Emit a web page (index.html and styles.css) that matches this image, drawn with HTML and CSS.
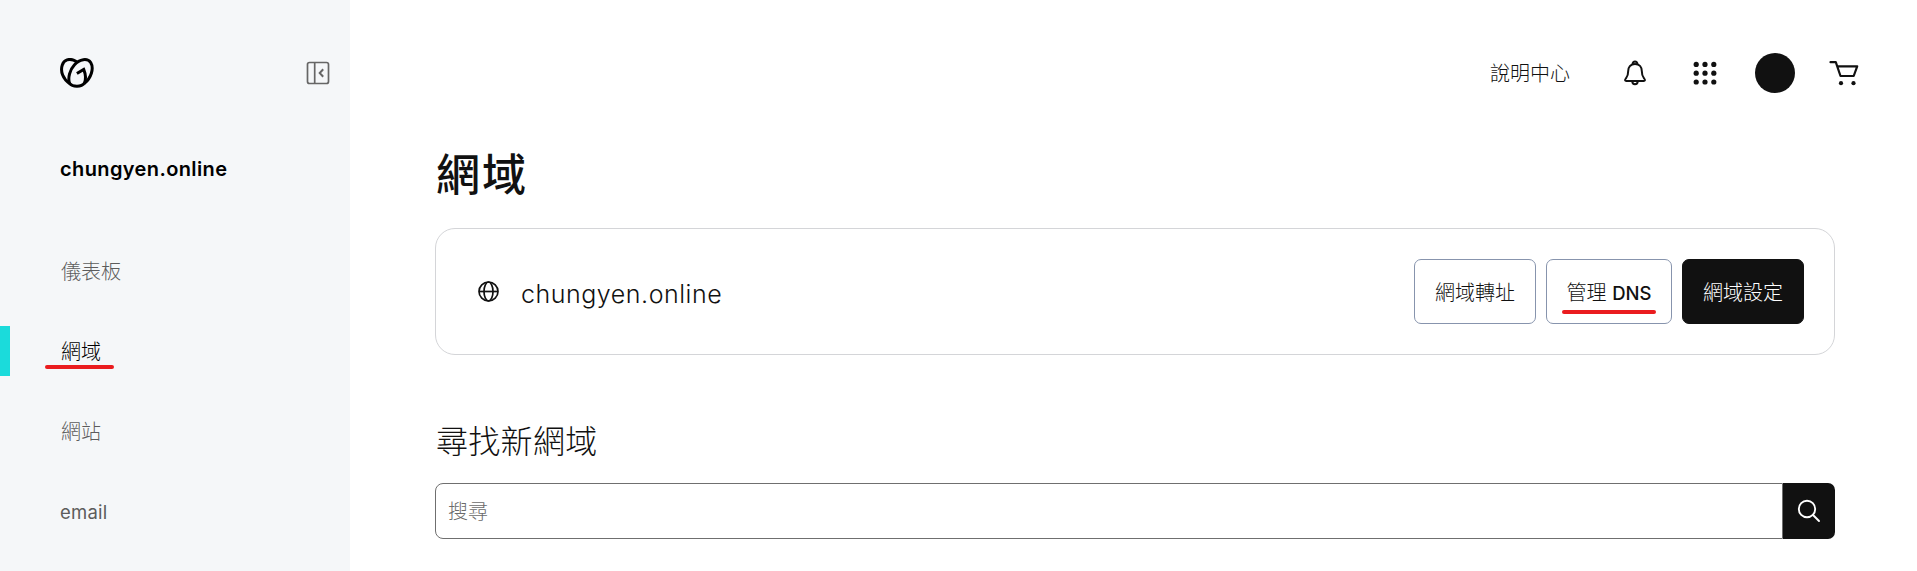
FILE: index.html
```html
<!DOCTYPE html>
<html lang="zh-Hant">
<head>
<meta charset="utf-8">
<title>網域</title>
<link rel="stylesheet" href="styles.css">
</head>
<body>
<div class="app">
  <aside class="sidebar">
    <div class="brand">
      <svg class="logo" width="34" height="30" viewBox="0 0 34 30" fill="none" stroke="#000" stroke-width="3">
        <path d="M24.5 25.2C21.500 29.200 12.500 29.200 9.500 25.400C3 21 .2 13.500 2.200 7.200C4 1.500 9.500 .5 13.500 2.200Q16 3.200 17.500 4.800"/>
        <path d="M9.700 25.700C7.400 20 10 11.500 14.500 6.700C19.500 1 27.500 -.2 30.700 4.500C34.300 10.500 31 20 24.400 25.400"/>
        <path d="M16.900 15.500L23.700 11.400Q27 19.500 24.300 25.500"/>
      </svg>
      <svg class="toggle" width="24" height="24" viewBox="0 0 24 24" fill="none" stroke="#666" stroke-width="1.700">
        <rect x="1.500" y="1.500" width="21" height="21" rx="2"/><path d="M8.700 1.500V22.500"/><path d="M17.200 8.200L13.700 12L17.200 15.800" stroke-width="2"/>
      </svg>
    </div>
    <div class="site-name">chungyen.online</div>
    <nav class="nav">
      <a class="nav-item">儀表板</a>
      <a class="nav-item active"><span class="marked">網域</span></a>
      <a class="nav-item">網站</a>
      <a class="nav-item email">email</a>
    </nav>
  </aside>
  <main class="main">
    <header class="topbar">
      <a class="help">說明中心</a>
      <svg class="bell" width="22" height="26" viewBox="0 0 22 26" fill="none" stroke="#111" stroke-width="2" stroke-linejoin="round">
        <path d="M11 4C6.400 4 4.200 7.300 4.200 11C4.200 16 3 17 1.800 18.500C.6 20 1 21 2.300 21H19.700C21 21 21.400 20 20.200 18.500C19 17 17.800 16 17.800 11C17.800 7.300 15.600 4 11 4Z"/>
        <path d="M8.800 4.300C8 .6 14 .6 13.200 4.300"/><path d="M8.300 21.300C8.300 25.300 13.700 25.300 13.700 21.300"/>
      </svg>
      <svg class="apps" width="24" height="24" viewBox="0 0 24 24" fill="#111">
        <circle cx="3.200" cy="3.400" r="2.600"/><circle cx="12" cy="3.400" r="2.600"/><circle cx="20.800" cy="3.400" r="2.600"/>
        <circle cx="3.200" cy="12.200" r="2.600"/><circle cx="12" cy="12.200" r="2.600"/><circle cx="20.800" cy="12.200" r="2.600"/>
        <circle cx="3.200" cy="21" r="2.600"/><circle cx="12" cy="21" r="2.600"/><circle cx="20.800" cy="21" r="2.600"/>
      </svg>
      <span class="avatar"></span>
      <svg class="cart" width="30" height="26" viewBox="0 0 30 26" fill="none" stroke="#111" stroke-width="2.200" stroke-linejoin="round">
        <path d="M1.500 2.200H6.800L11.500 16H24.700L28.200 6.300H8.300" stroke-linecap="round"/>
        <circle cx="12" cy="23.200" r="2.100" fill="#111" stroke="none"/><circle cx="24.500" cy="23.200" r="2.100" fill="#111" stroke="none"/>
      </svg>
    </header>
    <h1 class="title">網域</h1>
    <section class="card">
      <svg class="globe" width="22" height="22" viewBox="0 0 22 22" fill="none" stroke="#111" stroke-width="1.700">
        <circle cx="10.500" cy="10.500" r="9.500"/><ellipse cx="10.500" cy="10.500" rx="4.500" ry="9.500"/><path d="M1 10.500H20"/>
      </svg>
      <span class="domain">chungyen.online</span>
      <div class="actions">
        <button class="btn forward">網域轉址</button>
        <button class="btn dns"><span class="marked">管理 <b class="latin">DNS</b></span></button>
        <button class="btn dark">網域設定</button>
      </div>
    </section>
    <h2 class="subtitle">尋找新網域</h2>
    <div class="search">
      <div class="field">搜尋</div>
      <button class="go">
        <svg width="24" height="24" viewBox="0 0 24 24" fill="none" stroke="#fff" stroke-width="1.900" stroke-linecap="round">
          <circle cx="10" cy="10" r="8.200"/><path d="M16 16L22 22"/>
        </svg>
      </button>
    </div>
  </main>
</div>
</body>
</html>
```
FILE: styles.css
```css
* { box-sizing: border-box; }
body {
  margin: 0;
  background: #fff;
  color: #111;
  font: 300 20px/30px Inter, "Noto Sans CJK TC", sans-serif;
  overflow: hidden;
}
svg { display: block; flex: none; }
h1, h2 { margin: 0; }
button { font: inherit; color: inherit; padding: 0; margin: 0; }
.app { display: flex; height: 571px; }

.sidebar { width: 350px; flex: none; background: #f5f7f9; padding-top: 58px; }
.brand { display: flex; justify-content: space-between; height: 30px; padding: 0 20px 0 60px; }
.toggle { margin-top: 3px; }
.site-name {
  margin: 66px 0 0 60px;
  color: #000;
  font-size: 20px;
  font-weight: 600;
  letter-spacing: 0.38px;
}
.nav { display: flex; flex-direction: column; gap: 30px; margin-top: 62px; }
.nav-item {
  display: flex;
  align-items: center;
  height: 50px;
  padding: 2px 0 0 51px;
  border-left: 10px solid transparent;
  color: #5c5c5c;
}
.nav-item.active { border-color: #1bdbdb; color: #000; }
.nav-item.email { padding-left: 50px; font-size: 18.500px; font-weight: 400; letter-spacing: 0.2px; }

/* Red highlighter stroke under an item */
.marked { position: relative; white-space: nowrap; }
.marked::after {
  content: "";
  position: absolute;
  left: -16px;
  top: 28px;
  width: 69px;
  height: 4px;
  border-radius: 2px;
  background: #ea1c1f;
}

.main { flex: 1; padding: 53px 82px 0 85px; }
.topbar { display: flex; align-items: center; height: 40px; margin-right: -24px; }
.help { margin-left: auto; padding-top: 2px; }
.bell { margin-left: 54px; }
.apps { margin-left: 47px; }
.avatar { width: 40px; height: 40px; margin-left: 38px; border-radius: 50%; background: #111; }
.cart { margin-left: 34px; }
.title { margin: 51px 0 0 1px; font-size: 44px; line-height: 62px; font-weight: 500; letter-spacing: 2px; }
.card {
  display: flex;
  align-items: center;
  height: 127px;
  margin-top: 22px;
  padding: 0 30px 0 42px;
  border: 1px solid #d4d5d8;
  border-radius: 20px;
}
.domain { margin: 5px 0 0 21px; font-size: 25px; letter-spacing: 0.53px; }
.actions { display: flex; gap: 10px; margin-left: auto; }
.btn { width: 122px; height: 65px; padding-top: 2px; border: 1px solid #8794ad; border-radius: 7px; background: #fff; }
.btn.dns { width: 126px; }
.btn.dark { background: #111; border-color: #111; color: #fff; }
.dns .marked::after { left: -5px; top: 29px; width: 94px; }
.latin { font-size: 18.500px; font-weight: 500; }
.subtitle { margin: 64px 0 0 1px; font-size: 32px; line-height: 46px; font-weight: 300; letter-spacing: 0.3px; }
.search { display: flex; height: 56px; margin-top: 18px; }
.field {
  flex: 1;
  display: flex;
  align-items: center;
  padding: 2px 0 0 12px;
  border: 1px solid #6f6f6f;
  border-radius: 8px 0 0 8px;
  color: #6b6b6b;
}
.go {
  display: grid;
  place-items: center;
  width: 52px;
  border: 0;
  border-radius: 0 7px 7px 0;
  background: #111;
}
```
